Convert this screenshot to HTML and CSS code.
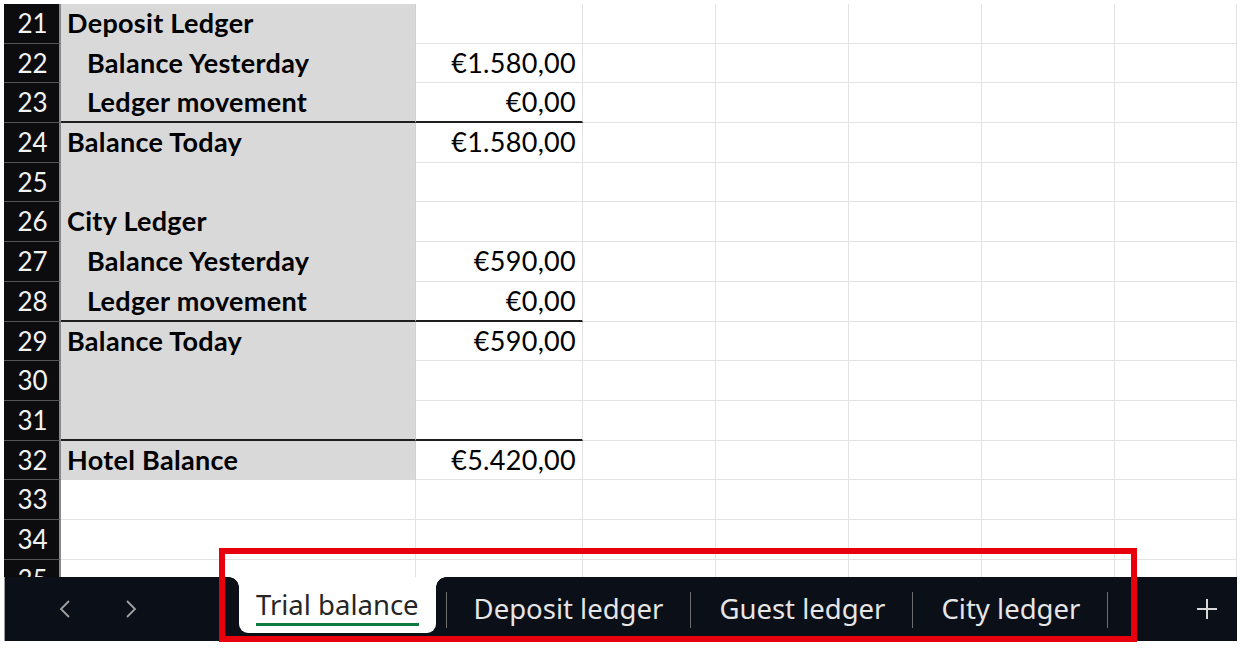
FILE: index.html
```
<!DOCTYPE html>
<html lang="en">
<head>
    <meta charset="UTF-8">
    <meta name="viewport" content="width=device-width, initial-scale=1.0">
    <title>Trial balance</title>
    <link rel="stylesheet" href="styles.css">
</head>
<body>
    <div class="workbook">
        <div class="sheet">
            <div class="row">
                <div class="rh">21</div>
                <div class="cell fill bold">Deposit Ledger</div>
                <div class="cell"></div><div class="cell"></div><div class="cell"></div><div class="cell"></div><div class="cell"></div><div class="cell"></div>
            </div>
            <div class="row">
                <div class="rh">22</div>
                <div class="cell fill bold indent">Balance Yesterday</div>
                <div class="cell num">€1.580,00</div>
                <div class="cell"></div><div class="cell"></div><div class="cell"></div><div class="cell"></div><div class="cell"></div>
            </div>
            <div class="row">
                <div class="rh">23</div>
                <div class="cell fill bold indent rule">Ledger movement</div>
                <div class="cell num rule">€0,00</div>
                <div class="cell"></div><div class="cell"></div><div class="cell"></div><div class="cell"></div><div class="cell"></div>
            </div>
            <div class="row">
                <div class="rh">24</div>
                <div class="cell fill bold">Balance Today</div>
                <div class="cell num">€1.580,00</div>
                <div class="cell"></div><div class="cell"></div><div class="cell"></div><div class="cell"></div><div class="cell"></div>
            </div>
            <div class="row">
                <div class="rh">25</div>
                <div class="cell fill"></div>
                <div class="cell"></div><div class="cell"></div><div class="cell"></div><div class="cell"></div><div class="cell"></div><div class="cell"></div>
            </div>
            <div class="row">
                <div class="rh">26</div>
                <div class="cell fill bold">City Ledger</div>
                <div class="cell"></div><div class="cell"></div><div class="cell"></div><div class="cell"></div><div class="cell"></div><div class="cell"></div>
            </div>
            <div class="row">
                <div class="rh">27</div>
                <div class="cell fill bold indent">Balance Yesterday</div>
                <div class="cell num">€590,00</div>
                <div class="cell"></div><div class="cell"></div><div class="cell"></div><div class="cell"></div><div class="cell"></div>
            </div>
            <div class="row">
                <div class="rh">28</div>
                <div class="cell fill bold indent rule">Ledger movement</div>
                <div class="cell num rule">€0,00</div>
                <div class="cell"></div><div class="cell"></div><div class="cell"></div><div class="cell"></div><div class="cell"></div>
            </div>
            <div class="row">
                <div class="rh">29</div>
                <div class="cell fill bold">Balance Today</div>
                <div class="cell num">€590,00</div>
                <div class="cell"></div><div class="cell"></div><div class="cell"></div><div class="cell"></div><div class="cell"></div>
            </div>
            <div class="row">
                <div class="rh">30</div>
                <div class="cell fill"></div>
                <div class="cell"></div><div class="cell"></div><div class="cell"></div><div class="cell"></div><div class="cell"></div><div class="cell"></div>
            </div>
            <div class="row">
                <div class="rh">31</div>
                <div class="cell fill rule"></div>
                <div class="cell rule"></div>
                <div class="cell"></div><div class="cell"></div><div class="cell"></div><div class="cell"></div><div class="cell"></div>
            </div>
            <div class="row">
                <div class="rh">32</div>
                <div class="cell fill bold">Hotel Balance</div>
                <div class="cell num">€5.420,00</div>
                <div class="cell"></div><div class="cell"></div><div class="cell"></div><div class="cell"></div><div class="cell"></div>
            </div>
            <div class="row">
                <div class="rh">33</div>
                <div class="cell"></div><div class="cell"></div><div class="cell"></div><div class="cell"></div><div class="cell"></div><div class="cell"></div><div class="cell"></div>
            </div>
            <div class="row">
                <div class="rh">34</div>
                <div class="cell"></div><div class="cell"></div><div class="cell"></div><div class="cell"></div><div class="cell"></div><div class="cell"></div><div class="cell"></div>
            </div>
            <div class="row">
                <div class="rh">35</div>
                <div class="cell"></div><div class="cell"></div><div class="cell"></div><div class="cell"></div><div class="cell"></div><div class="cell"></div><div class="cell"></div>
            </div>
        </div>

        <div class="tabbar">
            <div class="nav">
                <svg class="nav-arrow" width="14" height="20" viewBox="0 0 14 20"><path d="M11 2 L3 10 L11 18" fill="none" stroke="currentColor" stroke-width="1.8"/></svg>
                <svg class="nav-arrow" width="14" height="20" viewBox="0 0 14 20"><path d="M3 2 L11 10 L3 18" fill="none" stroke="currentColor" stroke-width="1.8"/></svg>
            </div>
            <div class="tab active"><span>Trial balance</span></div>
            <div class="tab sep">Deposit ledger</div>
            <div class="tab sep">Guest ledger</div>
            <div class="tab sep last">City ledger</div>
            <div class="add">
                <svg width="22" height="22" viewBox="0 0 22 22"><path d="M11 1 V21 M1 11 H21" stroke="currentColor" stroke-width="2"/></svg>
            </div>
        </div>

        <div class="highlight"></div>
    </div>
</body>
</html>
```

FILE: styles.css
```
:root {
    --header-bg: #0c0c0e;
    --bar-bg: #0b0f18;
    --fill: #d9d9d9;
    --grid: #e3e3e3;
    --rule: #1e1e1e;
    --excel-green: #107c41;
    --mark-red: #e8000c;
}

* {
    margin: 0;
    padding: 0;
    box-sizing: border-box;
}

body {
    background-color: #ffffff;
    font-family: 'Lato', 'Liberation Sans', sans-serif;
    color: #000;
}

.workbook {
    position: relative;
    width: 1243px;
    height: 648px;
    padding: 4px 6px 0 4px;
}

.sheet {
    height: 573px;
    overflow: hidden;
}

.row {
    display: grid;
    grid-template-columns: 57px 355px 167px 133px 133px 133px 133px 122px;
    height: 39.7px;
}

.rh {
    background-color: var(--header-bg);
    color: #f2f2f2;
    font-size: 26px;
    text-align: center;
    line-height: 38px;
    border-bottom: 1px solid #555;
    border-right: 2px solid #8a8a8a;
    padding-left: 2px;
}

.cell {
    border-right: 1px solid var(--grid);
    border-bottom: 1px solid var(--grid);
    font-size: 27px;
    letter-spacing: 0.3px;
    line-height: 38px;
    padding: 0 6px;
    white-space: nowrap;
    overflow: hidden;
}

.cell.fill {
    background-color: var(--fill);
    border-color: var(--fill);
    border-right-color: #cfcfcf;
}

.cell.bold {
    font-weight: 700;
}

.cell.indent {
    padding-left: 26px;
}

.cell.num {
    text-align: right;
}

.cell.rule {
    border-bottom: 2px solid var(--rule);
}

/* barra de hojas */
.tabbar {
    display: flex;
    align-items: stretch;
    height: 64px;
    width: 1233px;
    background-color: var(--bar-bg);
    border-left: 1px solid #9a9a9a;
    font-family: 'Noto Sans', 'Open Sans', sans-serif;
    font-size: 27.5px;
}

.nav {
    width: 234px;
    display: flex;
    align-items: center;
    gap: 52px;
    padding-left: 53px;
    color: #a2a2a2;
}

.tab {
    position: relative;
    display: flex;
    align-items: center;
    color: #e6e6e6;
    padding: 0 28px;
    padding-bottom: 2px;
}

.tab.sep::after {
    content: "";
    position: absolute;
    right: 0;
    top: 15px;
    bottom: 13px;
    width: 1px;
    background-color: #6e6e6e;
}

.tab.active + .tab::before {
    content: "";
    position: absolute;
    left: 0;
    top: 15px;
    bottom: 13px;
    width: 1px;
    background-color: #6e6e6e;
}

.tab.active {
    background-color: #ffffff;
    color: #262626;
    height: 56px;
    padding: 0 17px;
    border-radius: 0 0 9px 9px;
    margin-right: 10px;
}

.tab.active span {
    border-bottom: 3px solid var(--excel-green);
    padding-top: 4px;
    padding-bottom: 0;
    line-height: 1.25;
}

.tab.active::before,
.tab.active::after {
    content: "";
    position: absolute;
    top: 0;
    width: 10px;
    height: 10px;
}

.tab.active::before {
    left: -10px;
    background: radial-gradient(circle at 0 100%, transparent 9.5px, #ffffff 10px);
}

.tab.active::after {
    right: -10px;
    background: radial-gradient(circle at 100% 100%, transparent 9.5px, #ffffff 10px);
}

.add {
    margin-left: auto;
    width: 60px;
    display: flex;
    align-items: center;
    justify-content: center;
    color: #d8d8d8;
}

.highlight {
    position: absolute;
    left: 219px;
    top: 548px;
    width: 918px;
    height: 94px;
    border: 6px solid var(--mark-red);
    pointer-events: none;
}
```
